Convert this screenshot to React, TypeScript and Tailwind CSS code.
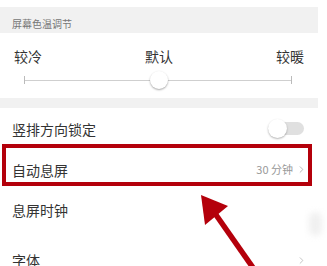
import { ChevronRight } from 'lucide-react'

const font = { fontFamily: '"Noto Sans CJK SC", "Noto Sans", sans-serif' }

function Row({ label, h, right }: { label: string; h: string; right?: React.ReactNode }) {
  return (
    <div className={`flex items-center justify-between pl-3 pr-[14px] ${h}`}>
      <span className="text-[14px] leading-none text-[#333]">{label}</span>
      {right}
    </div>
  )
}

export default function App() {
  return (
    <div className="relative w-[327px] h-[266px] overflow-hidden bg-white" style={font}>
      <div className="w-[318px]">
        <div className="h-[7px] bg-white" />
        {/* section header */}
        <div className="h-[26px] bg-[#f1f1f1] pl-3 pt-[8px] flex items-center">
          <span className="text-[10px] leading-none text-[#777]">屏幕色温调节</span>
        </div>

        {/* colour temperature slider */}
        <div className="h-[65px] px-[14px] pt-[15px]">
          <div className="flex justify-between text-[14px] leading-[16px] text-[#333]">
            <span>较冷</span>
            <span>默认</span>
            <span>较暖</span>
          </div>
          <div className="relative ml-[10px] mr-[12px] mt-[8px] h-[16px] flex items-center">
            <div className="w-px h-[8px] bg-[#bbb]" />
            <div className="flex-1 h-px bg-[#cfcfcf]" />
            <div className="w-px h-[8px] bg-[#bbb]" />
            <div className="absolute left-[47%] w-[18px] h-[18px] rounded-full bg-white shadow-[0_1px_2px_rgba(0,0,0,0.35)]" />
          </div>
        </div>

        <div className="h-[10px] bg-[#f1f1f1]" />

        <Row
          label="竖排方向锁定"
          h="h-[41px]"
          right={
            <div className="flex items-center w-[36px] h-[13px] rounded-full bg-[#e0e0e0]">
              <div className="w-[19px] h-[19px] rounded-full bg-white shadow-[0_1px_2px_rgba(0,0,0,0.3)]" />
            </div>
          }
        />
        <Row
          label="自动息屏"
          h="h-[41px]"
          right={
            <div className="flex items-center gap-[3px] text-[11px] leading-none text-[#999]">
              <span>30 分钟</span>
              <ChevronRight className="w-[11px] h-[11px] -mr-[3px]" strokeWidth={1.5} />
            </div>
          }
        />
        <Row label="息屏时钟" h="h-[40px]" />
        <div className="h-[10px]" />
        <Row
          label="字体"
          h="h-[40px]"
          right={<ChevronRight className="w-[11px] h-[11px] -mr-[3px] text-[#aaa]" strokeWidth={1.5} />}
        />
      </div>

      {/* faint background blotch */}
      <div className="absolute left-[309px] top-[212px] w-[13px] h-[24px] rounded-full bg-[#f0f0f0] blur-[3px]" />

      {/* annotation: red highlight box */}
      <div className="absolute left-[2px] top-[144px] w-[310px] h-[42px] border-[4.5px] border-[#b4000b]" />

      {/* annotation: arrow */}
      <svg className="absolute inset-0" width="327" height="266" viewBox="0 0 327 266">
        <line x1="214" y1="212" x2="256" y2="272" stroke="#b4000b" strokeWidth="5.5" />
        <polygon points="201,195 228,206 205,225" fill="#b4000b" />
      </svg>
    </div>
  )
}
